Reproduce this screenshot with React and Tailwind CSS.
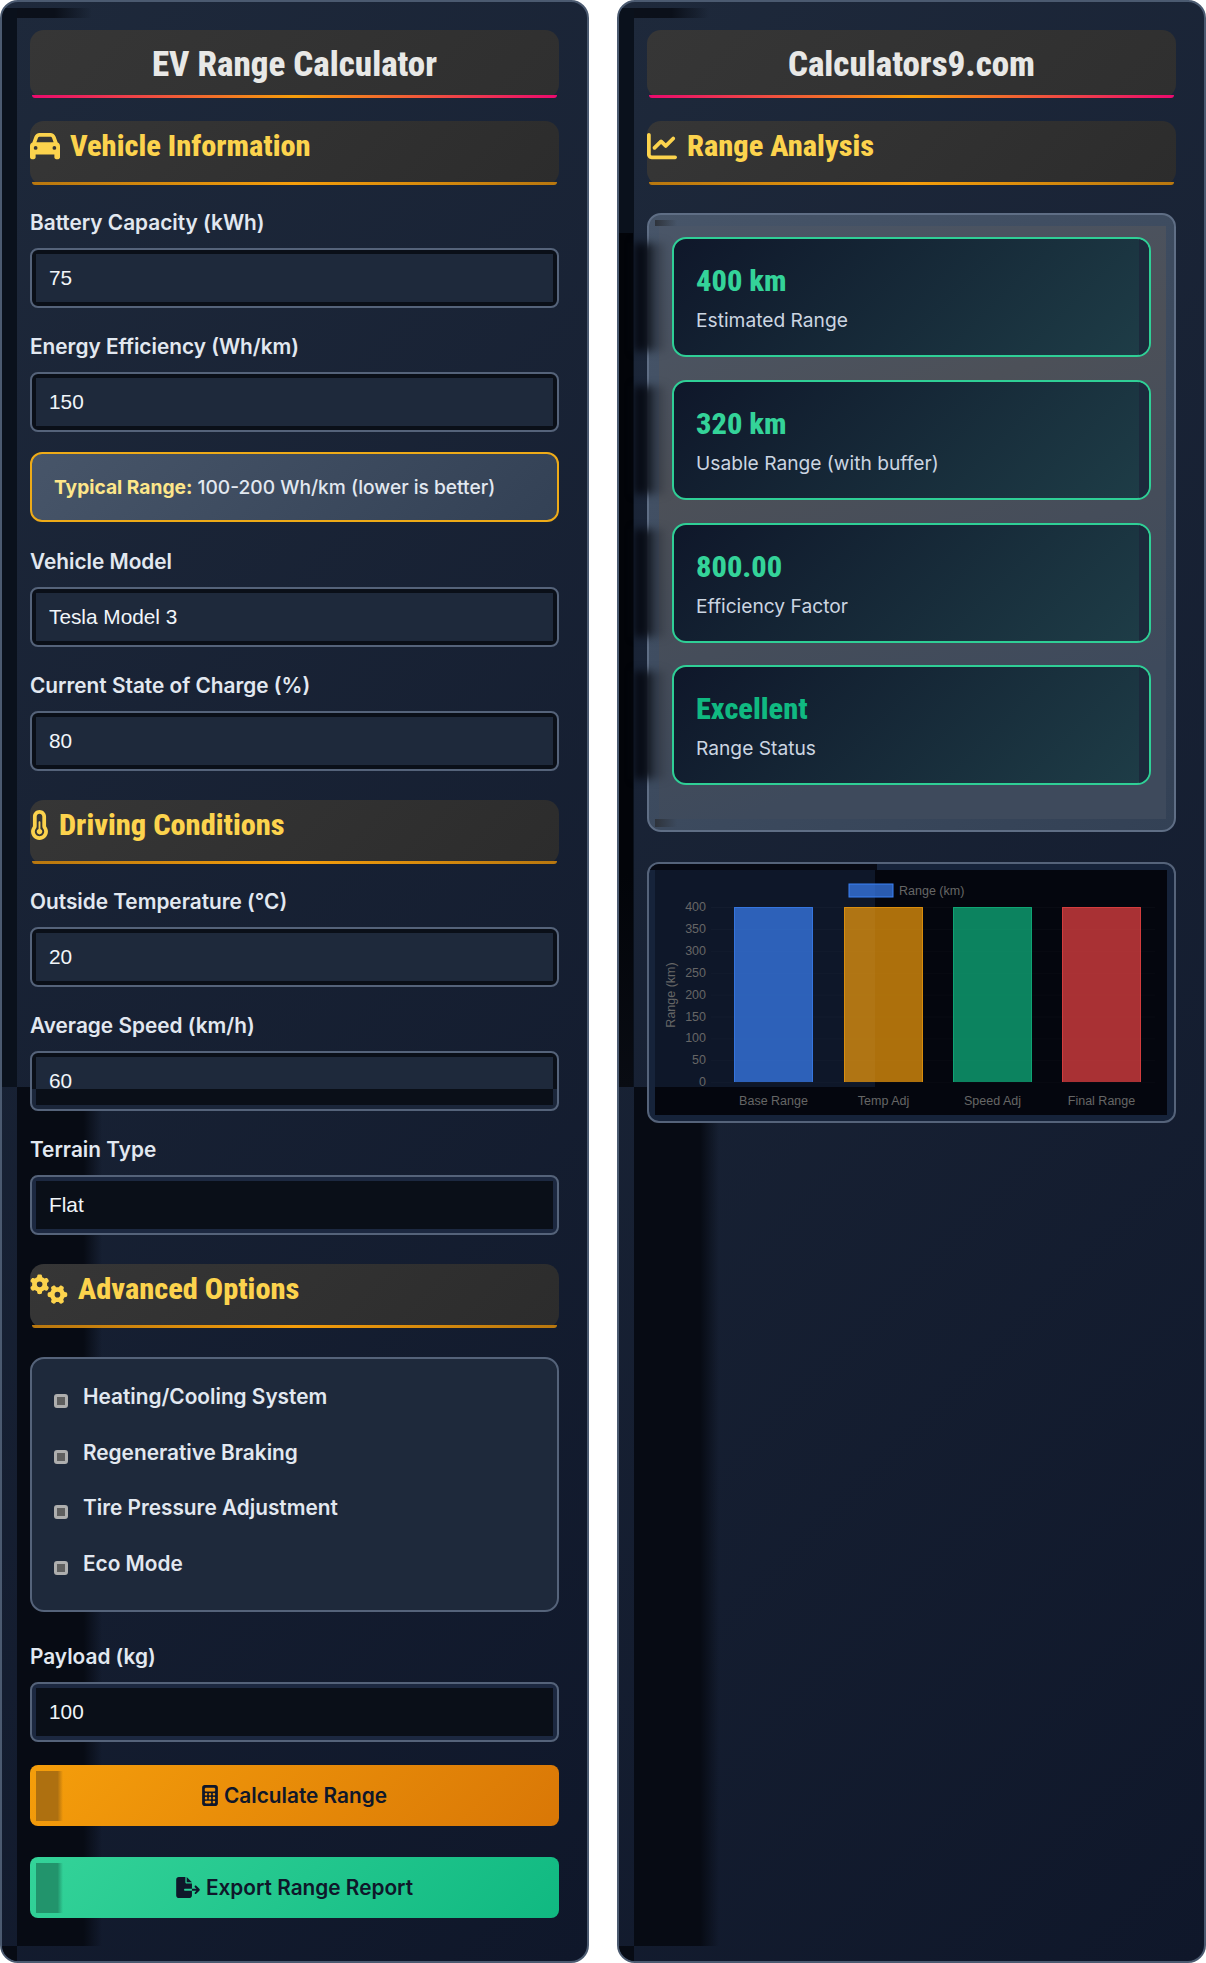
import { FaCar, FaChartLine, FaTemperatureHalf, FaGears, FaCalculator, FaFileExport } from "react-icons/fa6";

const HEADING = "font-['Roboto',sans-serif] font-extrabold [font-stretch:75%]";

// the dark bands that run down the left side of each panel
function PanelBands() {
  return (
    <>
      <div className="absolute left-0 top-[6px] h-[1079px] w-[15px] bg-[#0a111c]" />
      <div className="absolute left-[15px] top-[6px] h-[10px] w-[75px] bg-linear-to-r from-[#0b101a] via-[#0b101a] to-transparent" />
      <div className="absolute left-[15px] top-[1085px] h-[859px] w-[85px] bg-[linear-gradient(90deg,#070b14_0,#070b14_78%,transparent_100%)]" />
      <div className="absolute bottom-0 left-0 h-[15px] w-[15px] bg-[#070b14]" />
    </>
  );
}

function Title({ children }) {
  return (
    <div className="relative mb-[23px] flex h-[68px] items-start justify-center rounded-[14px] bg-[linear-gradient(135deg,#363636,#2f2f2f)] pt-[13px]">
      <h1 className={`${HEADING} text-[35px] leading-[44px] text-[#e8e8e6]`}>{children}</h1>
      <div className="absolute inset-x-[2px] bottom-0 h-[3px] rounded-b-[4px] bg-[linear-gradient(90deg,#ec0a6e,#f59e0b,#ec0a6e)]" />
    </div>
  );
}

function Section({ icon: Icon, iconWidth = "w-[30px]", mt = "mt-0", mb = "mb-[19px]", children }) {
  return (
    <div className={`relative flex h-[64px] items-start gap-[10px] rounded-[14px] bg-[linear-gradient(135deg,#363636,#2c2c2c)] pt-[8px] ${mt} ${mb}`}>
      <Icon className={`mt-[2px] h-[30px] text-[#fcd34d] ${iconWidth}`} />
      <h2 className={`${HEADING} text-[30.4px] leading-[34px] text-[#fcd34d]`}>{children}</h2>
      <div className="absolute inset-x-[2px] bottom-0 h-[3px] rounded-b-[4px] bg-[linear-gradient(90deg,#b8770f,#f59e0b,#b8770f)]" />
    </div>
  );
}

const BOX_STYLES = {
  normal: ["bg-[#0a0f18]", "bg-[#1e293b]"],
  split: ["bg-[linear-gradient(#0a0f18_0_36px,#1b263a_36px)]", "bg-[linear-gradient(#1e293b_0_32px,#0a0f18_32px)]"],
  dark: ["bg-[#1c2840]", "bg-[#0a0f18]"],
};

function Field({ label, value, variant = "normal", select = false, mb = "mb-5" }) {
  const [outer, inner] = BOX_STYLES[variant];
  const control = "h-full w-full appearance-none bg-transparent px-[13px] font-['Liberation_Sans',sans-serif] text-[20.8px] text-[#f1f5f9] outline-none";
  return (
    <div className={mb}>
      <label className="mb-[6px] block font-['Inter',sans-serif] text-[20.8px] font-semibold leading-[38px] text-[#e2e8f0]">{label}</label>
      <div className={`h-[60px] overflow-hidden rounded-[8px] border-2 border-[#55637a] p-[4px] ${outer}`}>
        <div className={`h-full ${inner}`}>
          {select ? (
            <select className={control} defaultValue={value}>
              <option>{value}</option>
            </select>
          ) : (
            <input className={control} defaultValue={value} />
          )}
        </div>
      </div>
    </div>
  );
}

function Check({ children }) {
  return (
    <label className="flex h-[28px] items-start gap-[15px] font-['Inter',sans-serif] text-[20.8px] font-semibold leading-[28px] text-[#e2e8f0]">
      <span className="mt-[11px] h-[14px] w-[14px] rounded-[3px] border-[3px] border-[#aeaeae] bg-[#5f5f5f]" />
      {children}
    </label>
  );
}

function ActionButton({ icon: Icon, iconWidth, colors, strip, children, mb }) {
  return (
    <button className={`relative flex h-[61px] w-full items-center justify-center gap-[6px] overflow-hidden rounded-[8px] font-['Inter',sans-serif] text-[20.8px] font-semibold text-[#0f172a] ${colors} ${mb}`}>
      <span className={`absolute bottom-[5px] left-[6px] top-[6px] w-[27px] ${strip}`} />
      <Icon className={`relative h-[21px] ${iconWidth}`} />
      <span className="relative">{children}</span>
    </button>
  );
}

const METRICS = [
  { value: "400 km", label: "Estimated Range" },
  { value: "320 km", label: "Usable Range (with buffer)" },
  { value: "800.00", label: "Efficiency Factor" },
  { value: "Excellent", label: "Range Status", color: "text-[#10b981]" },
];

const TICKS = [400, 350, 300, 250, 200, 150, 100, 50, 0];
const BARS = [
  { x: 79, label: "Base Range", fill: "rgba(59,130,246,0.7)", stroke: "#3b82f6" },
  { x: 189, label: "Temp Adj", fill: "rgba(245,158,11,0.7)", stroke: "#f59e0b" },
  { x: 298, label: "Speed Adj", fill: "rgba(16,185,129,0.7)", stroke: "#10b981" },
  { x: 407, label: "Final Range", fill: "rgba(239,68,68,0.7)", stroke: "#ef4444" },
];

function Chart() {
  return (
    <div className="relative h-[261px] overflow-hidden rounded-[12px] border-2 border-[#55637a] bg-[#16233a] px-[6px] py-[6px]">
      <div className="absolute left-0 top-0 h-[6px] w-[228px] bg-[#070a14]" />
      <svg width="512" height="245" viewBox="0 0 512 245" className="relative block bg-[#04060e] font-['Liberation_Sans',sans-serif]">
        <rect x="0" y="0" width="220" height="217" fill="#0e1729" />
        <rect x="194" y="14" width="44" height="13" fill="rgba(59,130,246,0.7)" stroke="#3b82f6" />
        <text x="244" y="25" fontSize="12.5" fill="#666">Range (km)</text>
        <text transform="translate(20 125) rotate(-90)" textAnchor="middle" fontSize="12.5" fill="#666">Range (km)</text>
        {TICKS.map((t, i) => (
          <g key={t}>
            <line x1="56" x2="500" y1={37.5 + i * 21.9} y2={37.5 + i * 21.9} stroke="rgba(255,255,255,0.025)" />
            <text x="51" y={41 + i * 21.9} textAnchor="end" fontSize="12.5" fill="#666">{t}</text>
          </g>
        ))}
        {BARS.map((b) => (
          <g key={b.label}>
            <rect x={b.x} y="37" width="79" height="175" fill={b.fill} />
            <path d={`M${b.x + 0.5} 212V37.5H${b.x + 78.5}V212`} fill="none" stroke={b.stroke} strokeOpacity="0.6" />
            <text x={b.x + 39.5} y="235" textAnchor="middle" fontSize="12.5" fill="#666">{b.label}</text>
          </g>
        ))}
      </svg>
    </div>
  );
}

function Panel({ children }) {
  return (
    <div className="relative min-w-0 overflow-hidden rounded-[18px] border-2 border-[#4b5a70] bg-[linear-gradient(135deg,#1e293b,#0f172a)] px-[28px] pb-[43px] pt-[28px]">
      <PanelBands />
      <div className="relative">{children}</div>
    </div>
  );
}

export default function App() {
  return (
    <div className="grid h-[1963px] w-[1206px] grid-cols-[589px_589px] gap-[28px] bg-white">
      <Panel>
        <Title>EV Range Calculator</Title>
        <Section icon={FaCar}>Vehicle Information</Section>
        <Field label="Battery Capacity (kWh)" value="75" />
        <Field label="Energy Efficiency (Wh/km)" value="150" />
        <div className="mb-[21px] flex h-[70px] items-center rounded-[12px] border-2 border-[#eeab18] bg-[linear-gradient(135deg,#475569,#334155)] px-[22px] font-['Inter',sans-serif] text-[19.2px] font-medium text-[#e2e8f0]">
          <p><strong className="font-bold text-[#fde68a]">Typical Range:</strong> 100-200 Wh/km (lower is better)</p>
        </div>
        <Field label="Vehicle Model" value="Tesla Model 3" />
        <Field label="Current State of Charge (%)" value="80" />
        <Section icon={FaTemperatureHalf} iconWidth="w-[19px]" mt="mt-[29px]">Driving Conditions</Section>
        <Field label="Outside Temperature (°C)" value="20" />
        <Field label="Average Speed (km/h)" value="60" variant="split" />
        <Field label="Terrain Type" value="Flat" variant="dark" select />
        <Section icon={FaGears} iconWidth="w-[38px]" mt="mt-[29px]" mb="mb-[29px]">Advanced Options</Section>
        <div className="mb-[26px] flex h-[255px] flex-col gap-[27.6px] rounded-[14px] border-2 border-[#55637a] bg-[#1e293b] px-[22px] pt-[24px]">
          <Check>Heating/Cooling System</Check>
          <Check>Regenerative Braking</Check>
          <Check>Tire Pressure Adjustment</Check>
          <Check>Eco Mode</Check>
        </div>
        <Field label="Payload (kg)" value="100" variant="dark" mb="mb-[23px]" />
        <ActionButton icon={FaCalculator} iconWidth="w-[16px]" colors="bg-[linear-gradient(135deg,#f59e0b,#d97706)]" strip="bg-[linear-gradient(90deg,#ae7010_80%,transparent)]" mb="mb-[31px]">
          Calculate Range
        </ActionButton>
        <ActionButton icon={FaFileExport} iconWidth="w-[24px]" colors="bg-[linear-gradient(135deg,#34d399,#10b981)]" strip="bg-[linear-gradient(90deg,#22946c_80%,transparent)]">
          Export Range Report
        </ActionButton>
      </Panel>

      <Panel>
        <Title>Calculators9.com</Title>
        <Section icon={FaChartLine} mb="mb-[28px]">Range Analysis</Section>
        <div className="relative mb-[30px] h-[619px] rounded-[14px] border-2 border-[#5f6e85] bg-[linear-gradient(135deg,#475569,#334155)] px-[23px] pt-[22px]">
          <div className="absolute -left-[30px] top-[18px] h-[854px] w-[14px] bg-[linear-gradient(#020409_75%,#090c13)]" />
          <div className="absolute inset-y-[11px] left-[10px] right-[8px] bg-[linear-gradient(160deg,#4a5668,#4c5058_35%,#3e4a5c_80%)]" />
          <div className="absolute left-[6px] top-[5px] h-[6px] w-[22px] bg-linear-to-r from-[#2e333b] to-transparent" />
          <div className="absolute bottom-[3px] left-[6px] h-[8px] w-[22px] bg-linear-to-r from-[#2e333b] to-transparent" />
          <div className="relative flex flex-col gap-[22.8px]">
            {METRICS.map((m) => (
              <div key={m.label} className="relative">
                <div className="absolute -left-[38px] inset-y-[6px] w-[34px] bg-[linear-gradient(90deg,#05080f,#0a0f1a_40%,rgba(40,46,56,0.85)_50%,transparent)] blur-[4px]" />
                <div className="relative h-[120px] overflow-hidden rounded-[14px] border-2 border-[#2fcf96] bg-[linear-gradient(135deg,#0f172a,#1e3d47)] px-[22px] pt-[24px]">
                  <div className={`${HEADING} text-[30.4px] leading-[36px] ${m.color || "text-[#34d399]"}`}>{m.value}</div>
                  <div className="mt-[7px] font-['Inter',sans-serif] text-[19.2px] leading-[28px] text-[#cbd5e1]">{m.label}</div>
                  <div className="absolute inset-y-0 right-0 w-[10px] bg-[#1c2a3c]" />
                </div>
              </div>
            ))}
          </div>
        </div>
        <Chart />
      </Panel>
    </div>
  );
}
